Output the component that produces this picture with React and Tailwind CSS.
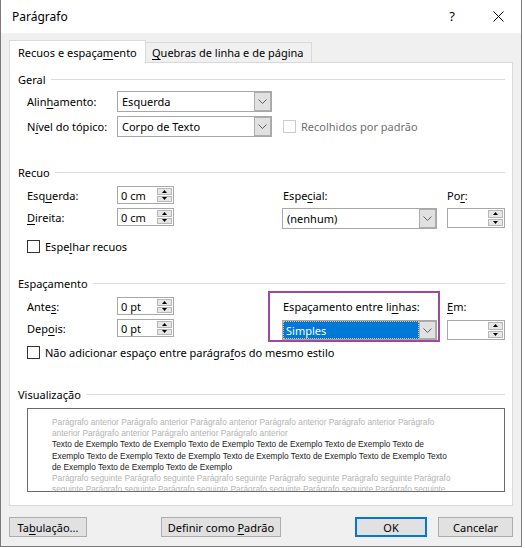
import React from 'react';

// mnemonic underline
const U = ({ children }) => <span className="underline decoration-1 underline-offset-[2px]">{children}</span>;

function Chevron() {
  return (
    <svg width="9" height="5" viewBox="0 0 9 5" fill="none" stroke="#5f5f5f" strokeWidth="1">
      <path d="M0.5 0.5 L4.5 4.5 L8.5 0.5" />
    </svg>
  );
}

function Select({ children, selected }) {
  return (
    <div className="flex h-full w-[155px] border border-[#a8a8a8] bg-white">
      <div
        className={
          selected
            ? 'flex flex-1 items-center bg-[#0078d7] pl-[3px] text-white outline-1 outline-dotted outline-[#f5b971] -outline-offset-1'
            : 'flex flex-1 items-center pl-[4px]'
        }
      >
        <span>{children}</span>
      </div>
      <div className="flex w-[17px] items-center justify-center border border-[#adadad] bg-[#e1e1e1]">
        <Chevron />
      </div>
    </div>
  );
}

function Arrow({ up }) {
  return (
    <svg width="5" height="3" viewBox="0 0 5 3">
      <path d={up ? 'M0 3 L2.5 0 L5 3 Z' : 'M0 0 L2.5 3 L5 0 Z'} fill="#000" />
    </svg>
  );
}

function Spin({ value, tall }) {
  return (
    <div
      className={
        tall
          ? 'flex h-[20px] w-[58px] border border-[#a8a8a8] bg-white'
          : 'flex h-[18px] w-[57px] border border-[#a8a8a8] bg-white'
      }
    >
      <div className="flex flex-1 items-center pl-[3px]">{value}</div>
      <div className="flex w-[16px] flex-col gap-px py-px pr-px">
        <div className="flex flex-1 items-center justify-center border border-[#b8b8b8] bg-[#e6e6e6]">
          <Arrow up />
        </div>
        <div className="flex flex-1 items-center justify-center border border-[#b8b8b8] bg-[#e6e6e6]">
          <Arrow />
        </div>
      </div>
    </div>
  );
}

function Check({ disabled }) {
  return (
    <div
      className={
        disabled
          ? 'h-[13px] w-[13px] border border-[#cccccc] bg-white'
          : 'h-[13px] w-[13px] border border-[#333333] bg-white'
      }
    />
  );
}

function GroupTitle({ children }) {
  return (
    <div className="flex h-[14px] items-center pl-[8px] pr-[7px]">
      <span>{children}</span>
      <div className="ml-[5px] h-px flex-1 bg-[#dcdcdc]" />
    </div>
  );
}

const previewLines = [
  { gray: true, text: 'Parágrafo anterior Parágrafo anterior Parágrafo anterior Parágrafo anterior Parágrafo anterior Parágrafo' },
  { gray: true, text: 'anterior Parágrafo anterior Parágrafo anterior Parágrafo anterior' },
  { gray: false, text: 'Texto de Exemplo Texto de Exemplo Texto de Exemplo Texto de Exemplo Texto de Exemplo Texto de' },
  { gray: false, text: 'Exemplo Texto de Exemplo Texto de Exemplo Texto de Exemplo Texto de Exemplo Texto de Exemplo Texto' },
  { gray: false, text: 'de Exemplo Texto de Exemplo Texto de Exemplo' },
  { gray: true, text: 'Parágrafo seguinte Parágrafo seguinte Parágrafo seguinte Parágrafo seguinte Parágrafo seguinte Parágrafo' },
  { gray: true, text: 'seguinte Parágrafo seguinte Parágrafo seguinte Parágrafo seguinte Parágrafo seguinte Parágrafo seguinte' },
];

export default function App() {
  return (
    <div className="h-[548px] w-[525px] bg-white font-['Segoe_UI','Noto_Sans',sans-serif] text-[11px] leading-none text-black">
      <div className="flex h-[547px] w-[522px] flex-col border border-t-0 border-[#7a7a7a] bg-[#f0f0f0]">
        {/* Title bar */}
        <div className="flex h-[33px] shrink-0 items-center bg-white pl-[11px]">
          <span className="text-[12px]">Parágrafo</span>
          <div className="ml-auto flex h-full w-[46px] items-center justify-center text-[13px]">?</div>
          <div className="flex h-full w-[46px] items-center justify-center">
            <svg width="11" height="11" viewBox="0 0 11 11" stroke="#000" strokeWidth="1">
              <path d="M0.5 0.5 L10.5 10.5 M10.5 0.5 L0.5 10.5" />
            </svg>
          </div>
        </div>

        {/* Tabs */}
        <div className="mt-[7px] flex h-[22px] shrink-0 items-end pl-[8px]">
          <div className="relative z-10 -mb-px flex h-[23px] w-[137px] items-center border border-b-0 border-[#d9d9d9] bg-white pl-[8px]">
            <span>Recuos e espaça<U>m</U>ento</span>
          </div>
          <div className="-ml-px flex h-[20px] w-[167px] items-center border border-b-0 border-[#d9d9d9] bg-[#f0f0f0] pl-[6px]">
            <span><U>Q</U>uebras de linha e de página</span>
          </div>
        </div>

        {/* Panel */}
        <div className="mx-[8px] flex h-[444px] shrink-0 flex-col border border-[#d9d9d9] bg-white pt-[9px]">
          <GroupTitle>Geral</GroupTitle>
          <div className="mt-[5px] flex h-[21px] items-center pl-[17px]">
            <span className="w-[90px]">Alin<U>h</U>amento:</span>
            <Select>Esquerda</Select>
          </div>
          <div className="mt-[4px] flex h-[21px] items-center pl-[17px]">
            <span className="w-[90px]">N<U>í</U>vel do tópico:</span>
            <Select>Corpo de Texto</Select>
            <div className="ml-[11px] flex items-center gap-[5px] text-[#6f6f6f]">
              <Check disabled />
              <span>Recolhidos por padrão</span>
            </div>
          </div>

          <div className="mt-[28px]">
            <GroupTitle>Recuo</GroupTitle>
          </div>
          <div className="flex h-[74px] pl-[17px]">
            <div className="flex w-[255px] flex-col">
              <div className="mt-[7px] flex h-[18px] items-center">
                <span className="w-[90px]">Esq<U>u</U>erda:</span>
                <Spin value="0 cm" />
              </div>
              <div className="mt-[4px] flex h-[18px] items-center">
                <span className="w-[90px]"><U>D</U>ireita:</span>
                <Spin value="0 cm" />
              </div>
              <div className="mt-[14px] flex h-[13px] items-center gap-[5px]">
                <Check />
                <span>Espe<U>l</U>har recuos</span>
              </div>
            </div>
            <div className="flex flex-col">
              <div className="mt-[7px] flex h-[18px] items-center pl-px">
                <span>Espe<U>c</U>ial:</span>
              </div>
              <div className="mt-[4px] h-[21px]">
                <Select>(nenhum)</Select>
              </div>
            </div>
            <div className="ml-[10px] flex flex-col">
              <div className="mt-[7px] flex h-[18px] items-center">
                <span>Po<U>r</U>:</span>
              </div>
              <div className="mt-[4px]">
                <Spin value="" tall />
              </div>
            </div>
          </div>

          <div className="mt-[23px]">
            <GroupTitle>Espaçamento</GroupTitle>
          </div>
          <div className="flex h-[52px] pl-[17px]">
            <div className="flex w-[241px] flex-col">
              <div className="mt-[7px] flex h-[18px] items-center">
                <span className="w-[90px]">Ante<U>s</U>:</span>
                <Spin value="0 pt" />
              </div>
              <div className="mt-[4px] flex h-[18px] items-center">
                <span className="w-[90px]">Dep<U>o</U>is:</span>
                <Spin value="0 pt" />
              </div>
            </div>
            <div className="mt-px flex h-[51px] w-[172px] flex-col border-2 border-[#9b4a9f] pl-[12px] pr-px">
              <div className="mt-[6px] flex h-[14px] items-center pl-px">
                <span>Espaçamento entre li<U>n</U>has:</span>
              </div>
              <div className="mt-[7px] h-[20px]">
                <Select selected>Simples</Select>
              </div>
            </div>
            <div className="ml-[7px] flex flex-col">
              <div className="mt-[9px] flex h-[14px] items-center">
                <span><U>E</U>m:</span>
              </div>
              <div className="mt-[7px]">
                <Spin value="" tall />
              </div>
            </div>
          </div>
          <div className="mt-[4px] flex h-[13px] items-center gap-[5px] pl-[17px]">
            <Check />
            <span>Não adicionar espaço entre parágra<U>f</U>os do mesmo estilo</span>
          </div>

          <div className="mt-[28px]">
            <GroupTitle>Visualização</GroupTitle>
          </div>
          <div className="ml-[17px] mt-[7px] h-[84px] w-[478px] overflow-hidden border border-[#6b6b6b] bg-white pl-[24px] pt-[8px] font-['Liberation_Sans',sans-serif] text-[8.3px]">
            {previewLines.map((line, i) => (
              <div
                key={i}
                className={
                  line.gray
                    ? 'h-[11.2px] whitespace-nowrap leading-[11.2px] text-[#b3b3b3]'
                    : 'h-[11.2px] whitespace-nowrap leading-[11.2px] text-[#1a1a1a]'
                }
              >
                {line.text}
              </div>
            ))}
          </div>
        </div>

        {/* Buttons */}
        <div className="mt-[11px] flex h-[20px] shrink-0 items-center px-[8px]">
          <button className="flex h-full w-[78px] items-center justify-center border border-[#adadad] bg-[#e1e1e1]">
            <span>Ta<U>b</U>ulação...</span>
          </button>
          <button className="ml-[74px] flex h-full w-[120px] items-center justify-center border border-[#adadad] bg-[#e1e1e1]">
            <span>Definir como <U>P</U>adrão</span>
          </button>
          <button className="ml-auto flex h-full w-[72px] items-center justify-center border-2 border-[#0078d7] bg-[#e1e1e1]">
            <span>OK</span>
          </button>
          <button className="ml-[11px] flex h-full w-[75px] items-center justify-center border border-[#adadad] bg-[#e1e1e1]">
            <span>Cancelar</span>
          </button>
        </div>
      </div>
    </div>
  );
}
